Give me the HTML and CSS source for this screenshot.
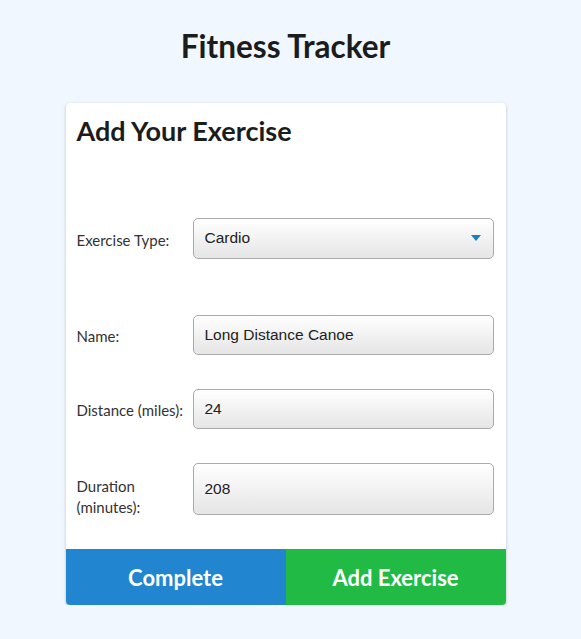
FILE: index.html
```html
<!DOCTYPE html>
<html>
<head>
	<meta charset="utf-8">
	<title>Fitness Tracker</title>
	<link rel="stylesheet" href="styles.css">
</head>
<body>
	<h1 class="title">Fitness Tracker</h1>
	<!-- 卡片 -->
	<div class="card">
		<div class="card-body">
			<h2 class="card-title">Add Your Exercise</h2>
			<div class="row row-type">
				<label class="row-label">Exercise Type:</label>
				<div class="field select">
					<span>Cardio</span>
					<i class="arrow"></i>
				</div>
			</div>
			<div class="row row-name">
				<label class="row-label">Name:</label>
				<input class="field" type="text" value="Long Distance Canoe">
			</div>
			<div class="row row-gap">
				<label class="row-label">Distance (miles):</label>
				<input class="field" type="text" value="24">
			</div>
			<div class="row row-gap">
				<label class="row-label label-two">Duration (minutes):</label>
				<input class="field field-tall" type="text" value="208">
			</div>
		</div>
		<div class="actions">
			<button class="btn btn-blue">Complete</button>
			<button class="btn btn-green">Add Exercise</button>
		</div>
	</div>
</body>
</html>
```

FILE: styles.css
```css
*{margin: 0px;padding: 0px;box-sizing: border-box;}
body{
	background: #f1f7fe;
	font-family: Lato, "Noto Sans", sans-serif;
	color: #1b1c1d;
	padding: 28px 10px 0px 0px;
}
.title{
	text-align: center;
	font-size: 31.5px;
	font-weight: bold;
	line-height: 36px;
}
.card{
	width: 440px;
	margin: 39px auto 0px;
	background: #fff;
	border-radius: 4px;
	box-shadow: 0px 1px 3px rgba(0,0,0,0.25);
	overflow: hidden;
}
.card-body{
	padding: 10px 12px 0px 11px;
}
.card-title{
	font-size: 27px;
	font-weight: bold;
	line-height: 36px;
}
.row{
	display: flex;
	align-items: center;
}
.row-type{margin-top: 69px;}
.row-name{margin-top: 56px;}
.row-gap{margin-top: 34px;}
.row-label{
	width: 116px;
	flex-shrink: 0;
	font-size: 15px;
	line-height: 21px;
	color: #333;
	padding-top: 3px;
}
.label-two{
	height: 52px;
	padding: 13px 30px 0px 0px;
}
.field{
	flex: 1;
	height: 40px;
	border: 1px solid #aaa;
	border-radius: 5px;
	background: linear-gradient(#ffffff, #e5e5e5);
	font-family: "Liberation Sans", Arial, sans-serif;
	font-size: 15.5px;
	color: #222;
	padding: 0px 11px;
	outline: none;
}
.select{
	height: 41px;
	display: flex;
	align-items: center;
	justify-content: space-between;
	padding-bottom: 2px;
}
.arrow{
	width: 0px;
	height: 0px;
	border-left: 5px solid transparent;
	border-right: 5px solid transparent;
	border-top: 6px solid #1b7fc1;
	margin-right: 1px;
}
.field-tall{
	height: 52px;
}
.actions{
	display: flex;
	margin-top: 34px;
}
.btn{
	flex: 1;
	height: 56px;
	border: 0px;
	color: #fff;
	font-family: Lato, "Noto Sans", sans-serif;
	font-size: 22px;
	font-weight: bold;
	cursor: pointer;
}
.btn-blue{background: #2185d0;}
.btn-green{background: #21ba45;}
```
